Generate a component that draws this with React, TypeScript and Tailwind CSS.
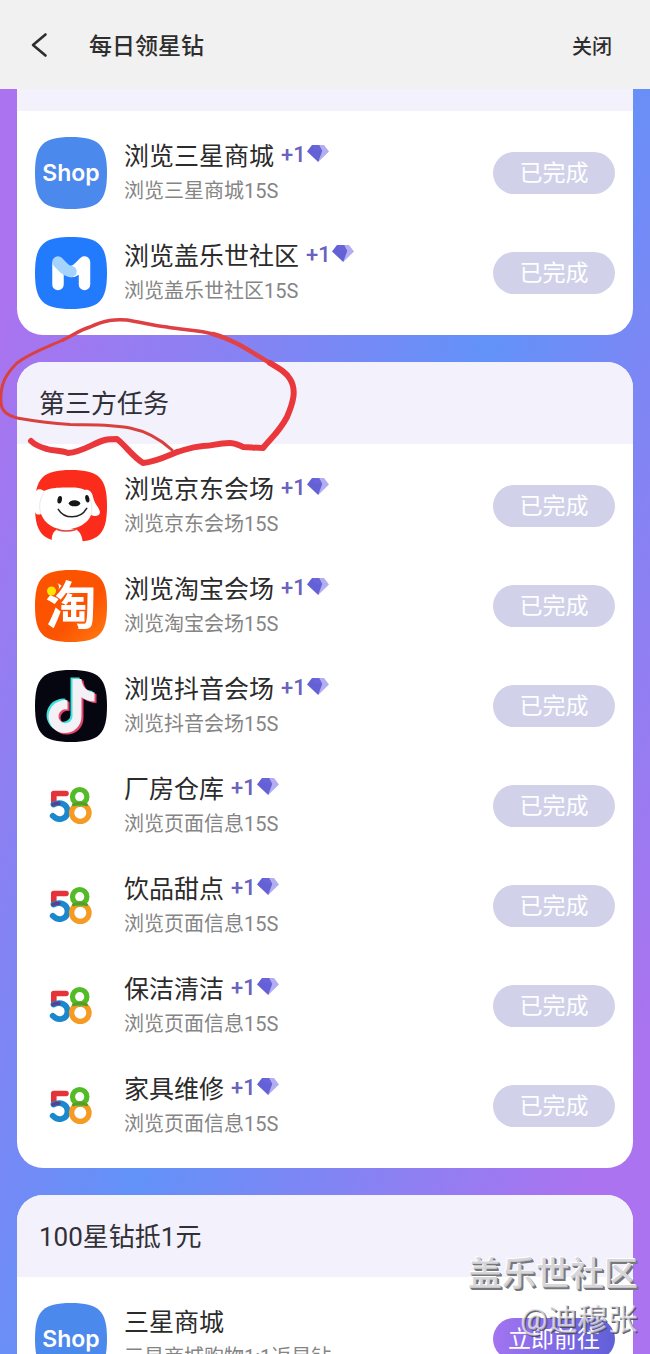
import type { ReactNode } from "react";

const SQUIRCLE = "M0 36C0 8 8 0 36 0S72 8 72 36 64 72 36 72 0 64 0 36Z";

function Diamond() {
  return (
    <svg viewBox="0 0 22 17" className="h-[17px] w-[22px]" aria-hidden="true">
      <path d="M5 0H17L22 6.5L11.2 17L10 4Z" fill="#b3adf3" />
      <path d="M5 0H12L15.2 6L11.2 17L0 6.5Z" fill="#6460d6" />
      <path d="M5 0H12L15.2 6L7 5Z" fill="#6965d9" />
    </svg>
  );
}

function ShopIcon() {
  return (
    <svg viewBox="0 0 72 72" className="size-[72px] shrink-0" role="img" aria-label="Shop">
      <path d={SQUIRCLE} fill="#4c89ec" />
      <text x="36" y="44" textAnchor="middle" fill="#fff" fontSize="23" fontWeight="600" fontFamily="Inter, sans-serif">
        Shop
      </text>
    </svg>
  );
}

function CommunityIcon() {
  return (
    <svg viewBox="0 0 72 72" className="size-[72px] shrink-0" aria-hidden="true">
      <path d={SQUIRCLE} fill="#227afc" />
      <g fill="none" strokeLinecap="round" strokeLinejoin="round" strokeWidth="11.5">
        <path d="M23 27V47.5" stroke="#fff" />
        <path d="M36 34.500C41 34.500 45 29 49.500 25V47.5" stroke="#fff" />
        <path d="M23 25C27 29 31 34.500 36 34.500" stroke="#a4d3fe" />
      </g>
    </svg>
  );
}

function JdIcon() {
  return (
    <svg viewBox="0 0 72 72" className="size-[72px] shrink-0" aria-hidden="true">
      <path d={SQUIRCLE} fill="#fb2c1b" />
      <path d="M17 73C16 66 18 61 23 59H40C45 61 47 66 48 73Z" fill="#fff" />
      <path
        d="M9 21C5 18 0 19 0 25V42C1 45 4 45 6 44C10 54 19 59.5 30 59.5C43 59.5 53 53 56 45C60 47 65 46 65 42C64 37 60 35 58 27C57 21 53 19 50 20C45 17 38 17.500 31 17.500C22 17.500 15 18 9 21Z"
        fill="#fff"
      />
      <path d="M22 59.500Q31 62.500 41 59.500" fill="none" stroke="#e2463d" strokeWidth="1.600" />
      <path d="M6 44Q2 34 9 22M56 45Q58 38 55 28" fill="none" stroke="#e8e1e0" strokeWidth=".8" />
      <ellipse cx="24.700" cy="29.700" rx="2.200" ry="3.800" fill="#161616" transform="rotate(12 24.700 29.700)" />
      <ellipse cx="52.300" cy="28.700" rx="2" ry="3.800" fill="#161616" transform="rotate(-12 52.300 28.700)" />
      <ellipse cx="39.500" cy="33.300" rx="5.700" ry="3" fill="#161616" />
      <path d="M23.300 39.300C29 49 45 50 51.700 38.300" fill="none" stroke="#222" strokeWidth="1.500" strokeLinecap="round" />
    </svg>
  );
}

function TaobaoIcon() {
  return (
    <svg viewBox="0 0 72 72" className="size-[72px] shrink-0" role="img" aria-label="淘宝">
      <defs>
        <linearGradient id="taobao" x1="0" y1="0" x2="1" y2="1">
          <stop offset="0.600" stopColor="#fc5300" />
          <stop offset="1" stopColor="#ff7d14" />
        </linearGradient>
      </defs>
      <path d={SQUIRCLE} fill="url(#taobao)" />
      <text x="36" y="54" textAnchor="middle" fill="#fff" fontSize="51" fontWeight="700" fontFamily="'Noto Sans CJK SC', sans-serif">
        淘
      </text>
      <circle cx="16.500" cy="17.500" r="7.500" fill="#fc5300" />
      <circle cx="16.500" cy="21" r="4.500" fill="#ffe600" />
    </svg>
  );
}

const NOTE =
  "M37 8.500H46C46.500 16 51.500 21.500 59 22V31C54 31 49.500 29.300 46 26.700V46A16.500 16.500 0 1 1 32 29.800V39A7 7 0 1 0 37 46Z";

function DouyinIcon() {
  return (
    <svg viewBox="0 0 72 72" className="size-[72px] shrink-0" aria-hidden="true">
      <path d={SQUIRCLE} fill="#060611" />
      <path d={NOTE} fill="#3fe3dc" transform="translate(-1.500 -1)" />
      <path d={NOTE} fill="#e8436a" transform="translate(2.500 2)" />
      <path d={NOTE} fill="#f4f1f6" transform="translate(.5 .5)" />
    </svg>
  );
}

function FiveEightIcon() {
  return (
    <svg viewBox="0 0 72 72" className="size-[72px] shrink-0" role="img" aria-label="58">
      <g fill="none" strokeLinecap="round" strokeLinejoin="round">
        <path d="M31 23.500H18.800V34" stroke="#e5333a" strokeWidth="5.600" />
        <path d="M18.500 34.500C26 31 32.500 35 32.500 41C32.500 49.500 23 51.500 17.700 45.800" stroke="#1b87cd" strokeWidth="5.800" />
        <circle cx="45.300" cy="42.700" r="8.700" stroke="#f59a22" strokeWidth="5.400" />
        <circle cx="44.700" cy="26.700" r="7.200" stroke="#52bb25" strokeWidth="5.200" />
        <path d="M38.500 34.800Q45 31.500 51.500 34.800" stroke="#5b9a26" strokeWidth="3" />
        <path d="M18 34.600Q20.500 33 24 33.200" stroke="#5a3f8e" strokeWidth="3.500" />
      </g>
    </svg>
  );
}

type Task = { title: string; detail: string; icon: ReactNode; reward?: boolean };

const visitTasks: Task[] = [
  { title: "浏览三星商城", detail: "浏览三星商城15S", icon: <ShopIcon />, reward: true },
  { title: "浏览盖乐世社区", detail: "浏览盖乐世社区15S", icon: <CommunityIcon />, reward: true },
];

const partnerTasks: Task[] = [
  { title: "浏览京东会场", detail: "浏览京东会场15S", icon: <JdIcon />, reward: true },
  { title: "浏览淘宝会场", detail: "浏览淘宝会场15S", icon: <TaobaoIcon />, reward: true },
  { title: "浏览抖音会场", detail: "浏览抖音会场15S", icon: <DouyinIcon />, reward: true },
  { title: "厂房仓库", detail: "浏览页面信息15S", icon: <FiveEightIcon />, reward: true },
  { title: "饮品甜点", detail: "浏览页面信息15S", icon: <FiveEightIcon />, reward: true },
  { title: "保洁清洁", detail: "浏览页面信息15S", icon: <FiveEightIcon />, reward: true },
  { title: "家具维修", detail: "浏览页面信息15S", icon: <FiveEightIcon />, reward: true },
];

const shopTasks: Task[] = [{ title: "三星商城", detail: "三星商城购物1:1返星钻", icon: <ShopIcon /> }];

function TaskRow({ task }: { task: Task }) {
  return (
    <li className="flex h-[100px] items-center gap-[17px]">
      {task.icon}
      <div className="min-w-0 flex-1">
        <div className="flex items-start gap-[7px]">
          <h3 className="text-[25px] leading-9 text-[#2b2b2b]">{task.title}</h3>
          {task.reward && (
            <span className="flex items-center gap-px text-[22px] leading-8 font-medium text-[#6a62bd]">
              +1
              <span className="pb-1">
                <Diamond />
              </span>
            </span>
          )}
        </div>
        <p className="text-xl leading-8 text-[#858585]">{task.detail}</p>
      </div>
      {task.reward ? (
        <button type="button" disabled className="h-[42px] w-[122px] shrink-0 rounded-full bg-[#d1d2ea] pt-0.5 text-[23px] text-white">
          已完成
        </button>
      ) : (
        <button
          type="button"
          className="h-[42px] w-[122px] shrink-0 rounded-full bg-linear-to-r from-[#a274f1] to-[#5f60d8] pt-0.5 text-[23px] text-white"
        >
          立即前往
        </button>
      )}
    </li>
  );
}

function TaskList({ tasks }: { tasks: Task[] }) {
  return (
    <ul className="px-[18px] py-3">
      {tasks.map((task) => (
        <TaskRow key={task.title} task={task} />
      ))}
    </ul>
  );
}

function Card({ heading, tasks }: { heading: string; tasks: Task[] }) {
  return (
    <section className="shrink-0 overflow-hidden rounded-[26px] bg-white">
      <h2 className="flex h-[82px] items-center bg-[#f3f1fb] px-[22px] pt-0.5 text-[26px] text-[#303036]">{heading}</h2>
      <TaskList tasks={tasks} />
    </section>
  );
}

function PenMarks() {
  return (
    <svg
      viewBox="0 0 320 160"
      className="pointer-events-none absolute top-[310px] left-0 h-[160px] w-[320px]"
      fill="none"
      strokeLinecap="round"
      strokeLinejoin="round"
      aria-hidden="true"
    >
      <path
        d="M172 140C158 127 145 121 130 118C110 114 90 115 70 114.500C50 113 35 111 23 109C8 107 1 101 1 92C0 75 5 65 17 53C30 43 45 38 63 30"
        stroke="#d9413f"
        strokeWidth="3"
      />
      <path d="M63 30C75 24 80 20 90 17C105 10 115 9 127 10C140 12 155 16 167 17C183 20 200 20 213 24" stroke="#dd3f42" strokeWidth="3.500" />
      <path d="M213 24C232 29 250 41 270 53" stroke="#e24145" strokeWidth="4.500" />
      <path
        d="M270 53C280 59 287 63 290 69C297 80 293 93 287 107C279 122 272 127 263 138C255 138 250 137 243 137C238 135 235 133 230 133C215 133 215 136 203 136C190 137 185 140 177 142C165 147 155 152 143 153C132 146 126 136 117 129C113 129 109 129 105 130C93 133 83 142 68 143C60 140 53 141 47 139C40 137 35 135 31 131"
        stroke="#ea373b"
        strokeWidth="6"
      />
    </svg>
  );
}

function Watermark() {
  return (
    <div className="pointer-events-none absolute right-3 bottom-3 flex flex-col items-end whitespace-nowrap">
      <span className="text-[34px] leading-[48px] font-medium text-[#d2d2d6]/90 [text-shadow:-1px_-1px_0_#ffffff,1px_1px_0_#77777c,2px_2px_0_#77777c]">
        盖乐世社区
      </span>
      <span className="text-[30px] leading-[44px] text-[#d0ced8]/50 [text-shadow:-1px_-1px_0_#ffffffaa,1px_1px_0_#45454bdd]">
        @迪穆张
      </span>
    </div>
  );
}

export default function App() {
  return (
    <div className="relative flex h-screen flex-col overflow-hidden bg-[linear-gradient(113deg,#ab73ef_11%,#6292f8_52%,#ab73ef_89%)] font-['Roboto','Noto_Sans_CJK_SC',sans-serif]">
      <header className="flex h-[89px] shrink-0 items-center bg-[#f1f1f1] pr-[38px] pl-[30px] text-[#2e2e2e]">
        <button type="button" aria-label="返回" className="mr-[41px]">
          <svg viewBox="0 0 18 26" className="h-[26px] w-[18px]" fill="none" stroke="currentColor" strokeWidth="2.600" strokeLinecap="round" strokeLinejoin="round">
            <path d="M15.500 2.500L3 13L15.500 23.500" />
          </svg>
        </button>
        <h1 className="flex-1 pt-1.5 text-[23px] font-medium">每日领星钻</h1>
        <button type="button" className="pt-1 text-xl font-medium">
          关闭
        </button>
      </header>
      <main className="flex min-h-0 flex-1 flex-col gap-[27px] overflow-y-auto px-[17px] [scrollbar-width:none]">
        <section className="shrink-0 overflow-hidden rounded-b-[26px] bg-white">
          <div className="h-[22px] bg-[#f3f1fb]" />
          <TaskList tasks={visitTasks} />
        </section>
        <Card heading="第三方任务" tasks={partnerTasks} />
        <Card heading="100星钻抵1元" tasks={shopTasks} />
      </main>
      <PenMarks />
      <Watermark />
    </div>
  );
}
